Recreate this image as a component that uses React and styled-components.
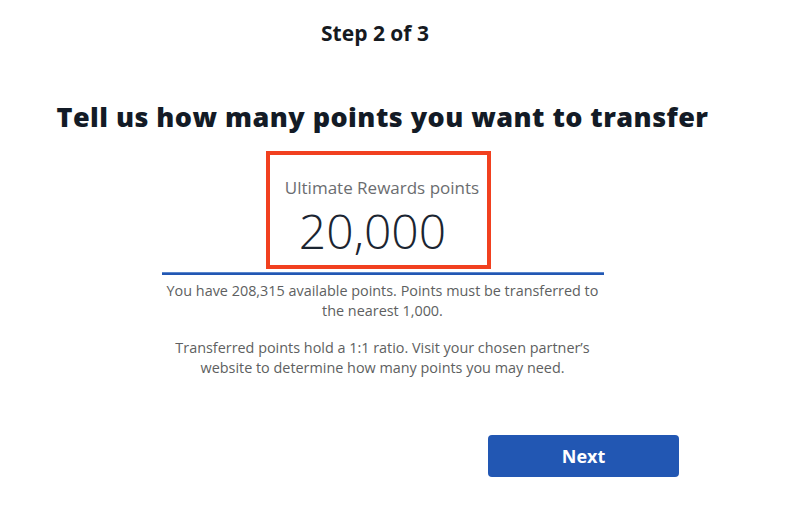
import React from "react";
import styled, { createGlobalStyle } from "styled-components";

const Global = createGlobalStyle`
  html, body { margin: 0; padding: 0; background: #ffffff; }
  body { font-family: "Open Sans", "Liberation Sans", sans-serif; }
  * { box-sizing: border-box; }
`;

const Page = styled.main`
  width: 765px;
  padding-top: 19px;
  display: flex;
  flex-direction: column;
  align-items: center;
`;

const StepLabel = styled.div`
  width: 100%;
  padding-right: 15px;
  text-align: center;
  font-size: 21px;
  line-height: 29px;
  font-weight: 700;
  color: #161a1f;
`;

const Heading = styled.h1`
  margin: 50px 0 0;
  font-size: 27px;
  line-height: 37px;
  font-weight: 800;
  color: #131b26;
  text-align: center;
  white-space: nowrap;
  letter-spacing: 0.45px;
`;

const Highlight = styled.div`
  width: 225px;
  height: 118px;
  margin: 16px 8px 0 0;
  border: 4px solid #f1401f;
  display: flex;
  flex-direction: column;
  padding-top: 21px;
`;

const FieldLabel = styled.div`
  padding-left: 7px;
  text-align: center;
  font-size: 17px;
  line-height: 23px;
  font-weight: 400;
  color: #6b6d70;
`;

const FieldValue = styled.div`
  margin-top: 8px;
  padding-right: 12px;
  text-align: center;
  font-size: 48px;
  line-height: 48px;
  font-weight: 300;
  color: #1b2531;
`;

const Underline = styled.div`
  width: 442px;
  height: 3px;
  margin-top: 3px;
  background: #2257b3;
  border-top: 1px solid #5a86cc;
`;

const Notes = styled.div`
  width: 442px;
  margin-top: 6px;
  display: flex;
  flex-direction: column;
  gap: 17px;
`;

const Note = styled.p`
  margin: 0;
  text-align: center;
  font-size: 14.4px;
  line-height: 20px;
  color: #5e5f61;
`;

const Footer = styled.div`
  width: 100%;
  margin-top: 57px;
  padding-right: 86px;
  display: flex;
  justify-content: flex-end;
`;

const Button = styled.button`
  width: 191px;
  height: 42px;
  border: none;
  border-radius: 4px;
  background: #2257b3;
  color: #ffffff;
  font-family: "Open Sans", "Liberation Sans", sans-serif;
  font-size: 18px;
  font-weight: 700;
  cursor: pointer;
`;

export default function App() {
  return (
    <>
      <Global />
      <Page>
        <StepLabel>Step 2 of 3</StepLabel>
        <Heading>Tell us how many points you want to transfer</Heading>
        <Highlight>
          <FieldLabel>Ultimate Rewards points</FieldLabel>
          <FieldValue>20,000</FieldValue>
        </Highlight>
        <Underline />
        <Notes>
          <Note>
            You have 208,315 available points. Points must be transferred to
            the nearest 1,000.
          </Note>
          <Note>
            Transferred points hold a 1:1 ratio. Visit your chosen partner’s
            website to determine how many points you may need.
          </Note>
        </Notes>
        <Footer>
          <Button>Next</Button>
        </Footer>
      </Page>
    </>
  );
}
